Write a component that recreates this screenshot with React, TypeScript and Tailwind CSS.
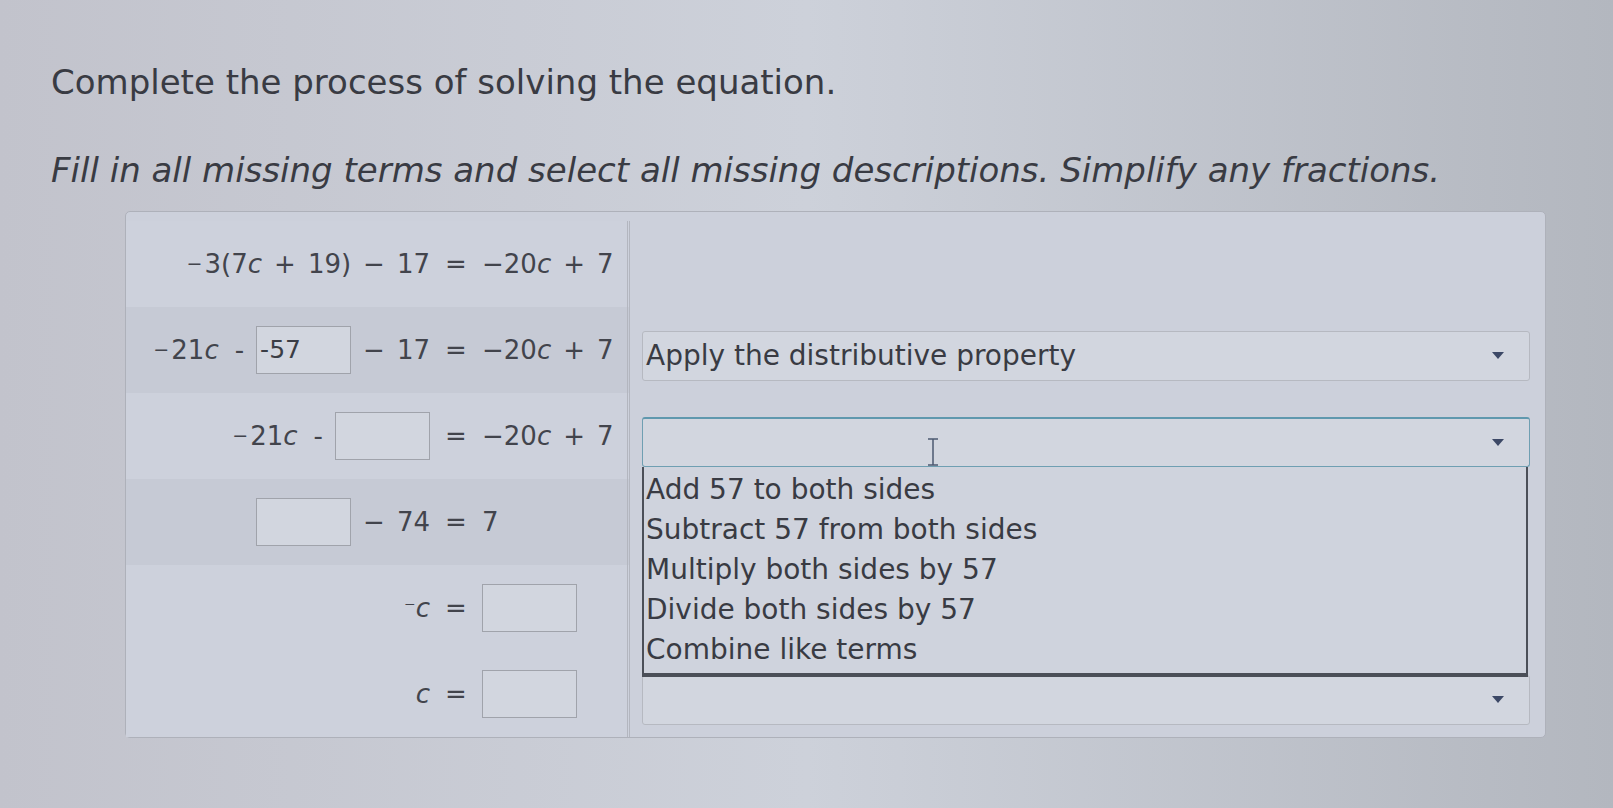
import React from "react"

const Op = ({ children }: { children: React.ReactNode }) => <span className="mx-[12px]">{children}</span>

const Neg = () => <span className="relative -top-[1px] inline-block w-[18px] text-left text-[19px]">−</span>

const V = () => <span className="italic">c</span>

const Box = ({ value = "" }: { value?: string }) => (
  <span className="inline-flex h-[48px] w-[95px] items-center border border-[#a0a3ab] bg-[#d2d6df] px-[3px] text-[25px] text-[#3a3d45]">
    {value}
  </span>
)

const Arrow = () => (
  <svg width="12" height="8" viewBox="0 0 12 8" className="absolute right-[25px] top-1/2 -translate-y-1/2">
    <path d="M0 0 L12 0 L6 7 Z" fill="#3c4866" />
  </svg>
)

function Select({ text, focused }: { text?: string; focused?: boolean }) {
  return (
    <div
      className={`relative flex h-[50px] items-center rounded-[3px] border bg-[#d2d6df] pl-[3px] text-[28px] ${
        focused ? "border-[#6f9fb2] border-t-[2px] border-t-[#5f98ae]" : "border-[#b6b9c1]"
      }`}
    >
      {text}
      {focused && (
        <svg width="12" height="28" viewBox="0 0 12 28" className="absolute left-[284px] top-[19px]">
          <path d="M1 1 H11 M6 1 V27 M1 27 H11" stroke="#4c5a72" strokeWidth="1.5" fill="none" />
        </svg>
      )}
      <Arrow />
    </div>
  )
}

function Eq({ left, right }: { left: React.ReactNode; right: React.ReactNode }) {
  return (
    <div className="flex items-center text-[26px] text-[#42444c]">
      <div className="flex w-[304px] items-center justify-end">{left}</div>
      <span className="w-[52px] text-center">=</span>
      <div className="flex items-center">{right}</div>
    </div>
  )
}

const options = [
  "Add 57 to both sides",
  "Subtract 57 from both sides",
  "Multiply both sides by 57",
  "Divide both sides by 57",
  "Combine like terms",
]

export default function App() {
  const rhs = (
    <>
      −20<V />
      <Op>+</Op>7
    </>
  )

  const rows: { left: React.ReactNode; right: React.ReactNode; shade: boolean; select: React.ReactNode }[] = [
    {
      left: (
        <>
          <Neg />
          3(7<V />
          <Op>+</Op>19)<Op>−</Op>17
        </>
      ),
      right: rhs,
      shade: false,
      select: null,
    },
    {
      left: (
        <>
          <Neg />
          21<V />
          <span className="ml-[16px] mr-[12px]">-</span>
          <Box value="-57" />
          <Op>−</Op>17
        </>
      ),
      right: rhs,
      shade: true,
      select: <Select text="Apply the distributive property" />,
    },
    {
      left: (
        <>
          <Neg />
          21<V />
          <span className="ml-[16px] mr-[12px]">-</span>
          <Box />
        </>
      ),
      right: rhs,
      shade: false,
      select: (
        <div className="relative">
          <Select focused />
          {/* open option list */}
          <div className="absolute left-0 right-[2px] top-full z-10 border-x-[2px] border-b-[4px] border-[#4b4f58] bg-[#cfd3dd] py-[3px] pl-[2px]">
            {options.map((o) => (
              <div key={o} className="flex h-[40px] items-center text-[28px]">
                {o}
              </div>
            ))}
          </div>
        </div>
      ),
    },
    {
      left: (
        <>
          <Box />
          <Op>−</Op>74
        </>
      ),
      right: <>7</>,
      shade: true,
      select: null,
    },
    {
      left: (
        <>
          <span className="text-[22px]">⁻</span>
          <V />
        </>
      ),
      right: <Box />,
      shade: false,
      select: null,
    },
    {
      left: <V />,
      right: <Box />,
      shade: false,
      select: <Select />,
    },
  ]

  return (
    <div className="h-[808px] w-full overflow-hidden bg-gradient-to-r from-[#c2c3cc] via-[#cdd1da] to-[#b3b7bf] font-['DejaVu_Sans',sans-serif] text-[#393b43]">
      <div className="pl-[51px] pt-[62px]">
        <h1 className="text-[34px] leading-[40px]">Complete the process of solving the equation.</h1>
        <p className="mt-[48px] text-[34px] italic leading-[40px]">
          Fill in all missing terms and select all missing descriptions. Simplify any fractions.
        </p>
      </div>

      <div className="ml-[125px] mt-[21px] w-[1421px] rounded-[5px] border border-[#aeb1ba] bg-[#ccd0db] pt-[9px]">
        {rows.map((r, i) => (
          <div key={i} className="flex h-[86px]">
            <div
              className={`flex w-[504px] items-center border-r-[3px] border-double border-[#b3b6bf] ${
                r.shade ? "bg-[#c6cad5]" : "bg-[#cdd1dc]"
              }`}
            >
              <Eq left={r.left} right={r.right} />
            </div>
            <div className="flex-1 pl-[12px] pr-[15px] pt-[24px]">{r.select}</div>
          </div>
        ))}
      </div>
    </div>
  )
}
